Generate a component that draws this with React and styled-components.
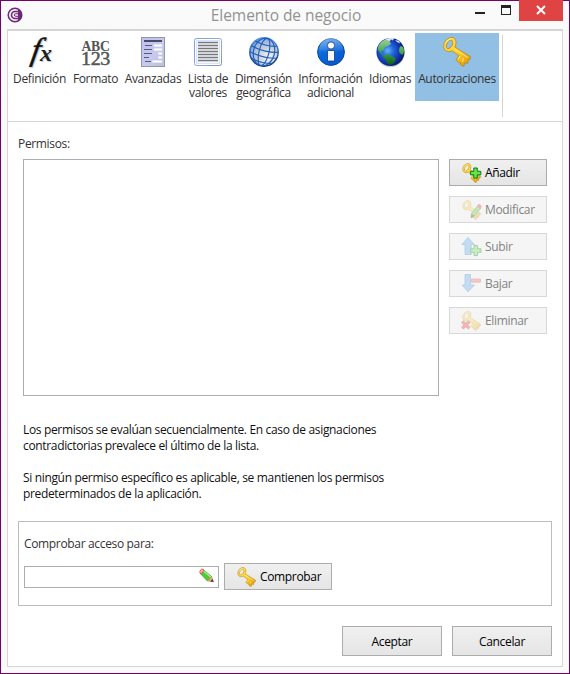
import React from 'react';
import styled, { createGlobalStyle, css } from 'styled-components';

const GlobalStyle = createGlobalStyle`
  * { box-sizing: border-box; }
  body { margin: 0; font: 12px/16px "Open Sans", "Noto Sans", sans-serif; letter-spacing: -0.34px; color: #111; }
  svg { display: block; flex: none; overflow: visible; }
`;

const Window = styled.div`
  width: 570px;
  height: 674px;
  display: flex;
  flex-direction: column;
  padding: 0 6px 6px;
  border: 1px solid #75006f;
  background: #fafafa;
`;

const TitleBar = styled.header`
  height: 28px;
  flex: none;
  display: grid;
  grid-template-columns: 120px 1fr 120px;
`;

const AppMark = styled.div`
  padding-top: 6px;
`;

const Title = styled.h1`
  margin: 0;
  padding: 2px 0 0 2px;
  text-align: center;
  font-size: 15.5px;
  font-weight: 400;
  line-height: 24px;
  letter-spacing: -0.06px;
  color: #929292;
  white-space: nowrap;
`;

const WindowControls = styled.div`
  display: flex;
  justify-content: flex-end;
  margin-top: -1px;
`;

const ControlButton = styled.button`
  height: 21px;
  width: ${(p) => (p.$close ? 44 : 26)}px;
  padding: 0 0 1px;
  border: 0;
  background: ${(p) => (p.$close ? '#e04343' : 'transparent')};
`;

const Panel = styled.main`
  flex: 1;
  display: flex;
  flex-direction: column;
  width: 556px;
  border: 1px solid #d5d5d5;
  border-top-width: 2px;
  background: #fff;
`;

const Ribbon = styled.nav`
  height: 91px;
  flex: none;
  display: flex;
  align-items: flex-start;
  padding: 2px 0 0 2px;
  border-bottom: 1px solid #d5d5d5;
`;

const Tab = styled.button`
  width: ${(p) => p.$w}px;
  height: 68px;
  margin: 0 0 0 ${(p) => (p.$active ? 1 : 0)}px;
  padding: 3px 0 0;
  border: 0;
  display: flex;
  flex-direction: column;
  align-items: center;
  background: ${(p) => (p.$active ? '#92c0e4' : 'transparent')};
  font: inherit;
  line-height: 14px;
  letter-spacing: inherit;
  color: #333;
`;

const TabLabel = styled.span`
  margin-top: 4px;
  white-space: pre;
`;

const RibbonDivider = styled.span`
  width: 1px;
  height: 82px;
  margin: 2px 0 0 3px;
  background: #d5d5d5;
`;

const Content = styled.section`
  flex: 1;
  display: flex;
  flex-direction: column;
  padding: 14px 10px 10px;
`;

const Label = styled.label`
  display: block;
  color: #333;
`;

const Permissions = styled.div`
  display: flex;
  justify-content: space-between;
  margin: 7px 5px 0;
`;

const ListBox = styled.div`
  width: 416px;
  height: 237px;
  border: 1px solid #abadb3;
  background: #fff;
`;

const Actions = styled.div`
  display: flex;
  flex-direction: column;
  gap: 10px;
`;

const Button = styled.button`
  width: ${(p) => p.$w || 98}px;
  height: ${(p) => p.$h || 27}px;
  padding: ${(p) => (p.$h ? '2px 0 0' : '0 0 0 11px')};
  display: flex;
  align-items: center;
  justify-content: ${(p) => (p.$h ? 'center' : 'flex-start')};
  gap: 3px;
  border: 1px solid #acacac;
  background: linear-gradient(#f0f0f0, #e5e5e5);
  font: inherit;
  letter-spacing: inherit;
  color: #000;
  ${(p) =>
    p.disabled &&
    css`
      border-color: #d8d8d8;
      background: #f5f5f5;
      color: #838383;
      svg { opacity: 0.32; }
    `}
`;

const Notes = styled.div`
  margin: 26px 5px 0;
  p { margin: 0 0 16px; white-space: pre-line; }
`;

const CheckBox = styled.section`
  height: 85px;
  margin-top: 3px;
  padding: 14px 5px 0;
  border: 1px solid #bcbcbf;
`;

const CheckRow = styled.div`
  display: flex;
  align-items: flex-start;
  gap: 5px;
  margin-top: 11px;
`;

const Field = styled.div`
  width: 195px;
  height: 22px;
  margin-top: 3px;
  display: flex;
  align-items: center;
  justify-content: flex-end;
  padding: 0 3px 2px 0;
  border: 1px solid #abadb3;
`;

const Footer = styled.footer`
  display: flex;
  justify-content: flex-end;
  gap: 10px;
  margin-top: auto;
`;

const Pic = ({ children, ...rest }) => (
  <svg width="32" height="32" viewBox="0 0 32 32" {...rest}>{children}</svg>
);

const FxIcon = () => (
  <Pic>
    <g fontFamily="Liberation Serif, serif" fontStyle="italic">
      <text transform="translate(7 24.5) skewX(-10)" fontSize="32" fill="#ccc" stroke="#ccc" strokeWidth=".6">f</text>
      <text transform="translate(6 23.500) skewX(-10)" fontSize="32" fill="#111" stroke="#111" strokeWidth=".5">f</text>
      <text x="17" y="26" fontSize="24" fontWeight="700" fill="#ccc">x</text>
      <text x="16" y="25" fontSize="24" fontWeight="700" fill="#222">x</text>
    </g>
  </Pic>
);

const AbcIcon = () => (
  <Pic>
    <g fontFamily="Liberation Serif, serif" fill="#555">
      <text x="1.500" y="14.500" fontSize="15" fontWeight="700" textLength="28" lengthAdjust="spacingAndGlyphs">ABC</text>
      <text x="1" y="29" fontSize="19.500" stroke="#555" strokeWidth=".5" textLength="29" lengthAdjust="spacingAndGlyphs">123</text>
    </g>
  </Pic>
);

const FormIcon = () => (
  <Pic>
    <defs>
      <linearGradient id="form" x1="0" y1="0" x2="1" y2="1">
        <stop stopColor="#bfbff8" /><stop offset=".55" stopColor="#c8c9ee" /><stop offset="1" stopColor="#bcc0d4" />
      </linearGradient>
    </defs>
    <rect x="4.500" y="1.500" width="23" height="29" fill="url(#form)" stroke="#9299a6" />
    <path d="M7 5h18" stroke="#4c4c66" strokeWidth="2" />
    <path d="M8 9.500h7M7 13.500h8M7 17.500h8M7 21.500h5M8 25.500h6" stroke="#5c5c70" strokeWidth="1.200" />
    <path d="M17 8.500h8v2h-8zM17 12.500h8v2h-8zM21.500 16.500H25v2h-3.500zM21.500 20.500H25v2h-3.500zM15.500 24.500H25v2h-9.500z" fill="#fff" stroke="#e8e8fa" strokeWidth=".6" />
  </Pic>
);

const ListIcon = () => (
  <Pic>
    <defs>
      <linearGradient id="list" x1="0" y1="0" x2="1" y2="1">
        <stop stopColor="#6fa6e4" /><stop offset=".6" stopColor="#9ba9d0" /><stop offset="1" stopColor="#7d8ebd" />
      </linearGradient>
    </defs>
    <rect x="2.500" y="2.500" width="27" height="27" rx="2" fill="#fff" stroke="url(#list)" />
    <rect x="4.500" y="4.500" width="23" height="23" fill="#f3f6fb" stroke="#d7e5f6" />
    <path d="M6 6.500h20M6 9.500h20M6 12.500h20M6 15.500h20M6 18.500h20M6 21.500h20M6 24.500h20" stroke="#77787c" strokeWidth="1.400" />
  </Pic>
);

const GlobeIcon = () => (
  <Pic>
    <defs>
      <radialGradient id="grid" cx=".65" cy=".68" r=".75">
        <stop stopColor="#f3f4f7" /><stop offset=".5" stopColor="#c5ccda" /><stop offset=".85" stopColor="#8fb0df" /><stop offset="1" stopColor="#3972c4" />
      </radialGradient>
      <linearGradient id="rim" x1="0" y1="0" x2="0" y2="1">
        <stop stopColor="#5b9be6" /><stop offset="1" stopColor="#0c3280" />
      </linearGradient>
    </defs>
    <circle cx="16" cy="16" r="14.200" fill="url(#grid)" stroke="url(#rim)" strokeWidth="1.500" />
    <g fill="none" stroke="#1c5cba" strokeWidth="1.100" transform="rotate(14 16 16)">
      <ellipse cx="16" cy="16" rx="5" ry="14" />
      <ellipse cx="16" cy="16" rx="10.500" ry="14" />
      <path d="M5 7.500q11 3 22 0M2.500 13q13.500 3.500 27 0M2.500 19q13.500 3.500 27 0M5 25q11 3 22 0" />
    </g>
  </Pic>
);

const InfoIcon = () => (
  <Pic>
    <defs>
      <linearGradient id="info" x1=".2" y1="0" x2=".8" y2="1">
        <stop stopColor="#2c87e8" /><stop offset=".45" stopColor="#0866dc" /><stop offset="1" stopColor="#0757c8" />
      </linearGradient>
      <linearGradient id="gloss" x1="0" y1="0" x2="0" y2="1">
        <stop stopColor="#fff" stopOpacity=".4" /><stop offset="1" stopColor="#fff" stopOpacity=".05" />
      </linearGradient>
    </defs>
    <circle cx="16" cy="16" r="13.400" fill="url(#info)" stroke="#064b9f" />
    <path d="M4 14a12 12 0 0 1 24 0q-12 4-24 0z" fill="url(#gloss)" />
    <circle cx="16" cy="9.500" r="3.600" fill="#fff" stroke="#0a3d83" strokeWidth=".8" />
    <path d="M12.500 14.500h7v10.500h-7z" fill="#f7f7f9" stroke="#0a3d83" strokeWidth=".8" />
  </Pic>
);

const EarthIcon = () => (
  <Pic>
    <defs>
      <radialGradient id="sea" cx=".4" cy=".45" r=".6">
        <stop stopColor="#63b6fa" /><stop offset=".35" stopColor="#2466de" /><stop offset=".8" stopColor="#0c2ba0" /><stop offset="1" stopColor="#08205f" />
      </radialGradient>
      <linearGradient id="land" x1="0" y1="0" x2="0" y2="1">
        <stop stopColor="#9fce9c" /><stop offset=".45" stopColor="#4eac55" /><stop offset="1" stopColor="#075e13" />
      </linearGradient>
    </defs>
    <ellipse cx="16.500" cy="17.500" rx="14" ry="13.800" fill="#777" opacity=".35" />
    <circle cx="16.500" cy="16" r="14" fill="url(#sea)" />
    <path d="M4 11q3-7 9-8l3 3 1 2-3 2-3 1-2 4-2-.5 1 3 3 2-1 .5-3-2.500-3-3.500zM9 20l4-2 5 2 4 3-2 4-4 2-3-2-1-3zM26 10.500q2.500-1 3.500 1.500 1.300 4-1 7l-3-2-.5-3z" fill="url(#land)" />
    <path d="M11 3.500q4-2.500 9-1.500l-1 2.500-2-1-1.500 2-2-1.500zM21 4l4 1 1 2.500-3-1.500z" fill="#eef6f8" opacity=".9" />
  </Pic>
);

const KeyShape = ({ g }) => (
  <>
    <defs>
      <linearGradient id={g} x1="0" y1="0" x2="1" y2="1">
        <stop stopColor="#ffe65a" /><stop offset=".5" stopColor="#ffd22b" /><stop offset="1" stopColor="#dc9100" />
      </linearGradient>
    </defs>
    <g fill={`url(#${g})`} stroke="#bd8411" strokeWidth=".8" strokeLinejoin="round">
      <path d="M8.500 1.800C12 .500 15 2.500 15 6.500q0 3-1.200 4.500l15.700 9.700-.500 2.800-2 .4-.3 3.400-3.200-.4-.5 3.500-3.300-1.500-.3-2.400-1.700.2-2.700-2.800 2.900-4.200-6.500-4.800Q7 16.500 4.500 14.500 1.500 12 3 7.500 4.500 3.200 8.500 1.800zM9.500 4Q6.500 4.800 5.300 9q-.8 3 1.200 3.800 2.500.2 4.300-2.800 1.300-2.300.9-4.300-.5-2.200-2.200-1.700z" fillRule="evenodd" />
    </g>
    <path d="M14 13.500l12.500 7.800M5.500 6.500q1.500-3 4.500-3.700M19 20l-1.500 3M22.500 22l-1 4" fill="none" stroke="#fff29a" strokeWidth=".9" />
  </>
);

const KeyIcon = () => <Pic><KeyShape g="keyBig" /></Pic>;

const Plus = () => (
  <path d="M12 8.500h3.500v3.300H19v3.500h-3.500v3.300H12v-3.300H8.700v-3.500H12z" fill="#65e34f" stroke="#0b7a13" strokeWidth="1" />
);

const SmallIcon = ({ children }) => (
  <svg width="21" height="21" viewBox="0 0 21 21">{children}</svg>
);

const SmallKey = ({ id }) => (
  <g transform="translate(0 .5) scale(.66)"><KeyShape g={id} /></g>
);

const AddIcon = () => (
  <SmallIcon>
    <SmallKey id="k1" />
    <g transform="translate(.8 -2.500)"><Plus /></g>
  </SmallIcon>
);

const EditIcon = () => (
  <SmallIcon>
    <SmallKey id="k2" />
    <path d="M16.500 7l3 2.500-6 7.500-3.500 2 .5-4.500z" fill="#5ccb49" stroke="#24751b" strokeWidth=".8" />
    <path d="M16.500 7l1-1.500q2.200-.3 2.700 2l-.7 2z" fill="#e43d3d" stroke="#d22" strokeWidth=".8" />
    <path d="M10.500 14.500l3 2.500-3.500 2z" fill="#4b3529" />
  </SmallIcon>
);

const UpIcon = () => (
  <SmallIcon>
    <path d="M7 1.500l6.500 7h-3.300v10H4V8.500H.8z" fill="#5aaaf0" stroke="#2c76bf" strokeWidth=".8" />
    <g transform="translate(1 1)"><Plus /></g>
  </SmallIcon>
);

const DownIcon = () => (
  <SmallIcon>
    <path d="M4 1.500h5.500V12h4l-6.500 6.800L1 12h3z" fill="#5aaaf0" stroke="#2c76bf" strokeWidth=".8" />
    <path d="M10.500 6h9v3.200h-9z" fill="#ed6a5e" stroke="#cf4439" strokeWidth=".8" />
  </SmallIcon>
);

const DeleteIcon = () => (
  <SmallIcon>
    <SmallKey id="k3" />
    <path d="M.5 12.500l1.800-1.800 2.500 2.200 2.500-2.200 1.800 1.800-2.300 2.500 2.300 2.300-1.800 1.800-2.500-2.200-2.500 2.200-1.800-1.800 2.300-2.300z" fill="#f13125" stroke="#b01811" strokeWidth=".7" />
  </SmallIcon>
);

const CheckIcon = () => <SmallIcon><SmallKey id="k4" /></SmallIcon>;

const PencilIcon = () => (
  <svg width="16" height="16" viewBox="0 0 16 16">
    <path d="M4 1.500l8.500 7-4 4.500L1.300 5.500z" fill="#51cb38" stroke="#299425" strokeWidth=".7" />
    <path d="M4.500 3l7.500 6.200" stroke="#a5f28b" strokeWidth="1.300" />
    <path d="M1.300 5.500Q.2 3.500 1.500 2T4 1.200l.9.900-2.700 4z" fill="#f4b6b6" stroke="#e33f45" strokeWidth=".8" />
    <path d="M12.500 8.500L14.500 13.800 8.500 13z" fill="#e7b375" stroke="#b57945" strokeWidth=".5" />
    <path d="M13.500 10.800l1.200 3.200-3.500-.4z" fill="#474747" />
  </svg>
);

const LogoIcon = () => (
  <svg width="17" height="17" viewBox="0 0 17 17">
    <circle cx="8" cy="8" r="6.800" fill="#f4ecf5" stroke="#6d2876" strokeWidth="1.500" />
    <path d="M11 2.200a6.500 6.500 0 0 1 0 11.600z" fill="#6d2876" />
    <path d="M11.500 4.500H8A3.500 3.500 0 0 0 8 11.500h3.500" fill="none" stroke="#6d2876" strokeWidth="1.600" />
    <path d="M11 6.700H8.700a1.300 1.300 0 0 0 0 2.600H11" fill="none" stroke="#6d2876" strokeWidth="1" />
  </svg>
);

const tabs = [
  ['Definición', 59, FxIcon],
  ['Formato', 53, AbcIcon],
  ['Avanzadas', 62, FormIcon],
  ['Lista de\nvalores', 48, ListIcon],
  ['Dimensión\ngeográfica', 63, GlobeIcon],
  ['Información\nadicional', 71, InfoIcon],
  ['Idiomas', 48, EarthIcon],
  ['Autorizaciones', 84, KeyIcon],
];

const actions = [
  ['Añadir', AddIcon, false],
  ['Modificar', EditIcon, true],
  ['Subir', UpIcon, true],
  ['Bajar', DownIcon, true],
  ['Eliminar', DeleteIcon, true],
];

export default function App() {
  return (
    <>
      <GlobalStyle />
      <Window>
        <TitleBar>
          <AppMark><LogoIcon /></AppMark>
          <Title>Elemento de negocio</Title>
          <WindowControls>
            <ControlButton aria-label="Minimizar">
              <svg width="26" height="20"><path d="M8 12h10v2H8z" fill="#222" /></svg>
            </ControlButton>
            <ControlButton aria-label="Maximizar">
              <svg width="26" height="20"><path d="M8 5h10v10H8zM9 8v6h8V8z" fillRule="evenodd" fill="#222" /></svg>
            </ControlButton>
            <ControlButton $close aria-label="Cerrar">
              <svg width="44" height="20"><path d="M18 6l8 8M26 6l-8 8" stroke="#fff" strokeWidth="2" /></svg>
            </ControlButton>
          </WindowControls>
        </TitleBar>
        <Panel>
          <Ribbon>
            {tabs.map(([text, w, Icon], i) => (
              <Tab key={text} $w={w} $active={i === 7}>
                <Icon />
                <TabLabel>{text}</TabLabel>
              </Tab>
            ))}
            <RibbonDivider />
          </Ribbon>
          <Content>
            <Label>Permisos:</Label>
            <Permissions>
              <ListBox />
              <Actions>
                {actions.map(([text, Icon, off]) => (
                  <Button key={text} disabled={off}><Icon />{text}</Button>
                ))}
              </Actions>
            </Permissions>
            <Notes>
              <p>{'Los permisos se evalúan secuencialmente. En caso de asignaciones\ncontradictorias prevalece el último de la lista.'}</p>
              <p>{'Si ningún permiso específico es aplicable, se mantienen los permisos\npredeterminados de la aplicación.'}</p>
            </Notes>
            <CheckBox>
              <Label>Comprobar acceso para:</Label>
              <CheckRow>
                <Field><PencilIcon /></Field>
                <Button $w={108}><CheckIcon />Comprobar</Button>
              </CheckRow>
            </CheckBox>
            <Footer>
              <Button $w={100} $h={30}>Aceptar</Button>
              <Button $w={100} $h={30}>Cancelar</Button>
            </Footer>
          </Content>
        </Panel>
      </Window>
    </>
  );
}
